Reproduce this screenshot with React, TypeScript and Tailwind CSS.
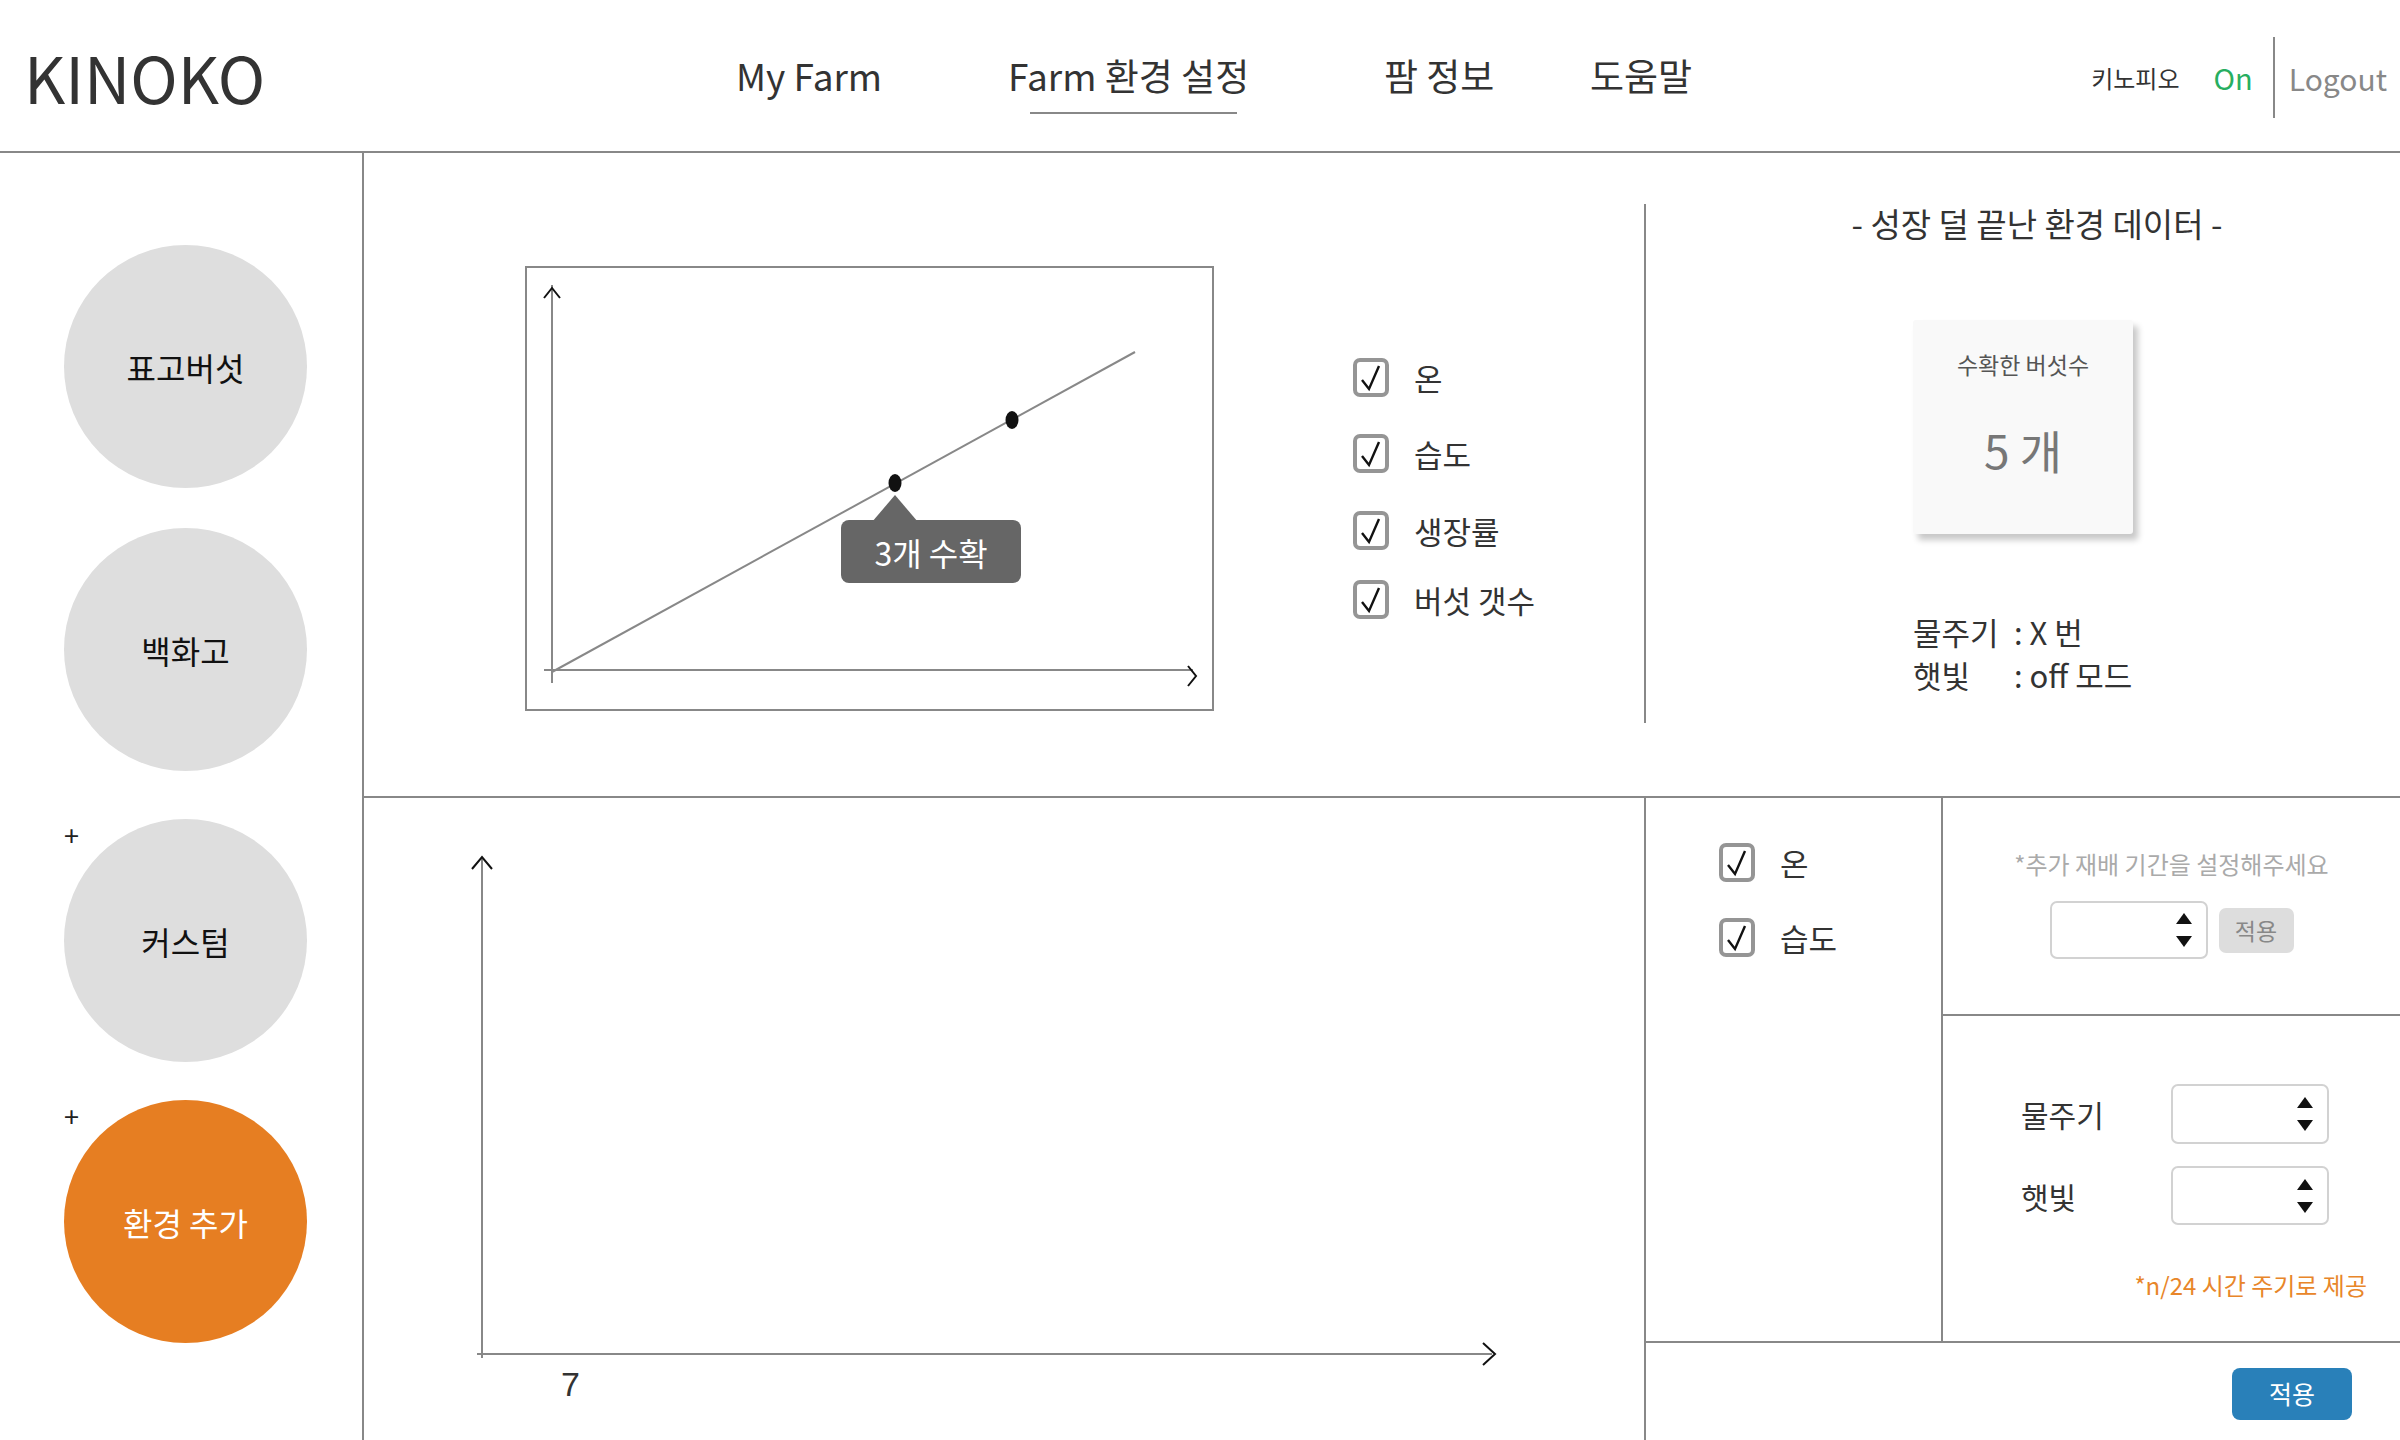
import React from 'react';

function CheckBox() {
  return (
    <div className="w-[36px] h-[39px] shrink-0 rounded-[7px] border-4 border-[#959595] bg-white">
      <svg width="28" height="31" viewBox="0 0 28 31">
        <polyline points="5,18 12,27 22,4" fill="none" stroke="#111" strokeWidth="2.4" />
      </svg>
    </div>
  );
}

function CheckRow({ label, className = '' }: { label: string; className?: string }) {
  return (
    <div className={`flex items-center gap-[25px] ${className}`}>
      <CheckBox />
      <span className="text-[31px] leading-none text-[#333]">{label}</span>
    </div>
  );
}

function Spinner({ className = '' }: { className?: string }) {
  return (
    <div className={`border-2 border-[#d2d2d2] rounded-[7px] bg-white flex items-center justify-end pr-[14px] ${className}`}>
      <svg width="16" height="34" viewBox="0 0 16 34">
        <polygon points="8,0 16,11 0,11" fill="#111" />
        <polygon points="0,23 16,23 8,34" fill="#111" />
      </svg>
    </div>
  );
}

function Circle({ label, active, plus, className = '' }: { label: string; active?: boolean; plus?: boolean; className?: string }) {
  return (
    <div className={`relative w-[243px] h-[243px] ${className}`}>
      {plus && <span className="absolute left-0 top-[2px] text-[27px] leading-none text-[#222]">+</span>}
      <div
        className={`w-full h-full rounded-full flex items-center justify-center text-[32px] ${
          active ? 'bg-[#e67e22] text-white' : 'bg-[#dedede] text-[#111]'
        }`}
      >
        {label}
      </div>
    </div>
  );
}

export default function App() {
  return (
    <div className="w-[2400px] h-[1440px] bg-white flex flex-col overflow-hidden text-[#333] font-['Noto_Sans_CJK_KR','Noto_Sans',sans-serif]">
      {/* Header */}
      <header className="h-[153px] shrink-0 flex items-center border-b-2 border-[#888] pr-[13px]">
        <div className="w-[736px] pl-[24px] text-[64px] leading-none">KINOKO</div>
        <nav className="flex items-center text-[37px] leading-none">
          <a className="w-[272px]">My Farm</a>
          <a className="w-[376px] relative">
            Farm 환경 설정
            <span className="absolute left-[22px] top-[55px] w-[207px] h-[2px] bg-[#888]" />
          </a>
          <a className="w-[206px]">팜 정보</a>
          <a>도움말</a>
        </nav>
        <div className="ml-auto flex items-center pt-[4px]">
          <span className="text-[24px] leading-none">키노피오</span>
          <span className="ml-[34px] text-[29px] leading-none text-[#27ae60]">On</span>
          <span className="ml-[20px] w-[2px] h-[81px] bg-[#888]" />
          <span className="ml-[14px] text-[30px] leading-none text-[#888]">Logout</span>
        </div>
      </header>

      <div className="flex flex-1">
        {/* Sidebar */}
        <aside className="w-[364px] shrink-0 border-r-2 border-[#888] pt-[92px] pl-[64px] flex flex-col">
          <Circle label="표고버섯" />
          <Circle label="백화고" className="mt-[40px]" />
          <Circle label="커스텀" plus className="mt-[48px]" />
          <Circle label="환경 추가" plus active className="mt-[38px]" />
        </aside>

        <main className="flex-1 flex flex-col">
          {/* Top section */}
          <section className="h-[645px] shrink-0 border-b-2 border-[#888] flex">
            <div className="w-[1280px] shrink-0 flex items-start">
              <div className="relative ml-[161px] mt-[113px] w-[689px] h-[445px] border-2 border-[#888]">
                <svg width="685" height="441" viewBox="2 2 685 441" className="block">
                  <line x1="27" y1="19" x2="27" y2="417" stroke="#888" strokeWidth="2" />
                  <polyline points="19,32 27,22 35,32" fill="none" stroke="#111" strokeWidth="2" />
                  <line x1="19" y1="404" x2="668" y2="404" stroke="#888" strokeWidth="2" />
                  <polyline points="663,400 671,410 663,420" fill="none" stroke="#111" strokeWidth="2" />
                  <line x1="27" y1="406" x2="610" y2="86" stroke="#888" strokeWidth="2" />
                  <ellipse cx="370" cy="217" rx="6.5" ry="9" fill="#111" />
                  <ellipse cx="487" cy="154" rx="6.5" ry="9" fill="#111" />
                  <polygon points="370,229 347,256 393,256" fill="#666" />
                </svg>
                <div className="absolute left-[314px] top-[252px] w-[180px] h-[63px] rounded-[8px] bg-[#666] text-white text-[32px] leading-none flex items-center justify-center">
                  3개 수확
                </div>
              </div>
              <div className="ml-[139px] mt-[205px] flex flex-col">
                <CheckRow label="온" />
                <CheckRow label="습도" className="mt-[37px]" />
                <CheckRow label="생장률" className="mt-[38px]" />
                <CheckRow label="버섯 갯수" className="mt-[30px]" />
              </div>
            </div>
            <div className="w-[2px] h-[519px] mt-[51px] bg-[#888] shrink-0" />
            <div className="flex-1 flex flex-col items-center">
              <div className="mt-[54px] pl-[28px] text-[33px] leading-none">- 성장 덜 끝난 환경 데이터 -</div>
              <div className="mt-[80px] w-[220px] h-[214px] bg-[#f9f9f9] rounded-[3px] shadow-[5px_6px_6px_rgba(0,0,0,0.22)] flex flex-col items-center pt-[33px]">
                <div className="text-[23px] leading-none text-[#555]">수확한 버섯수</div>
                <div className="mt-[50px] text-[46px] leading-none text-[#777]">5 개</div>
              </div>
              <div className="mt-[76px] w-[220px] grid grid-cols-[101px_auto] text-[31px] leading-[43px] whitespace-nowrap">
                <span>물주기</span>
                <span>: X 번</span>
                <span>햇빛</span>
                <span>: off 모드</span>
              </div>
            </div>
          </section>

          {/* Bottom section */}
          <section className="flex-1 flex">
            <div className="w-[1280px] shrink-0">
              <svg width="1280" height="642" viewBox="0 0 1280 642" className="block">
                <line x1="118" y1="61" x2="118" y2="560" stroke="#888" strokeWidth="2" />
                <polyline points="108,71 118,59 128,71" fill="none" stroke="#111" strokeWidth="2" />
                <line x1="113" y1="556" x2="1128" y2="556" stroke="#888" strokeWidth="2" />
                <polyline points="1119,545 1131,556 1119,567" fill="none" stroke="#111" strokeWidth="2" />
                <text x="197" y="598" fontSize="34" fill="#333" fontFamily="'Liberation Sans', Arial, sans-serif">7</text>
              </svg>
            </div>
            <div className="flex-1 border-l-2 border-[#888] flex flex-col">
              <div className="h-[545px] shrink-0 border-b-2 border-[#888] flex">
                <div className="w-[297px] shrink-0 border-r-2 border-[#888] pt-[45px] pl-[73px] flex flex-col">
                  <CheckRow label="온" />
                  <CheckRow label="습도" className="mt-[36px]" />
                </div>
                <div className="flex-1 flex flex-col">
                  <div className="h-[218px] shrink-0 border-b-2 border-[#888] flex flex-col items-center pt-[54px]">
                    <div className="text-[24px] leading-none text-[#aaa]">*추가 재배 기간을 설정해주세요</div>
                    <div className="mt-[25px] flex items-center gap-[11px]">
                      <Spinner className="w-[158px] h-[58px]" />
                      <button className="w-[75px] h-[45px] rounded-[7px] bg-[#dddddd] text-[23px] text-[#888]">적용</button>
                    </div>
                  </div>
                  <div className="flex-1 flex flex-col pt-[68px] pl-[78px]">
                    <div className="flex items-center">
                      <span className="w-[150px] text-[30px] leading-none">물주기</span>
                      <Spinner className="w-[158px] h-[60px]" />
                    </div>
                    <div className="flex items-center mt-[22px]">
                      <span className="w-[150px] text-[30px] leading-none">햇빛</span>
                      <Spinner className="w-[158px] h-[59px]" />
                    </div>
                    <div className="self-end mr-[33px] mt-[48px] text-[24px] leading-none text-[#e8862a]">*n/24 시간 주기로 제공</div>
                  </div>
                </div>
              </div>
              <div className="flex-1 flex justify-end items-start pt-[25px] pr-[48px]">
                <button className="w-[120px] h-[52px] rounded-[8px] bg-[#2980b9] text-white text-[25px]">적용</button>
              </div>
            </div>
          </section>
        </main>
      </div>
    </div>
  );
}
